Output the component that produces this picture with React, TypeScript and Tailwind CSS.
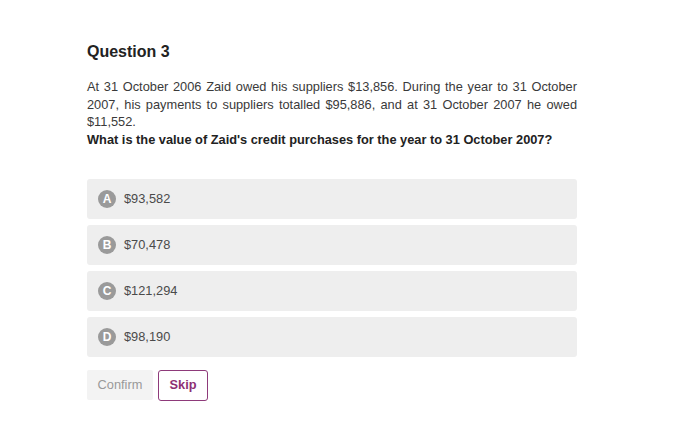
export default function App() {
  const options = [
    { letter: "A", text: "$93,582" },
    { letter: "B", text: "$70,478" },
    { letter: "C", text: "$121,294" },
    { letter: "D", text: "$98,190" },
  ];

  return (
    <div className="w-[700px] h-[426px] bg-white font-['Liberation_Sans',Arial,sans-serif] text-[#333]">
      <div className="ml-[87px] w-[490px] pt-[42px]">
        <h1 className="text-[16px] font-bold text-[#222] leading-[20px]">Question 3</h1>

        {/* Question body */}
        <p className="mt-[16px] text-[12.8px] leading-[17.5px] text-justify text-[#3a3a3a]">
          At 31 October 2006 Zaid owed his suppliers $13,856. During the year to 31 October 2007,
          his payments to suppliers totalled $95,886, and at 31 October 2007 he owed $11,552.
        </p>
        <p className="text-[12.8px] leading-[18px] font-bold text-[#222]">
          What is the value of Zaid's credit purchases for the year to 31 October 2007?
        </p>

        {/* Options */}
        <div className="mt-[30px] flex flex-col gap-[6px]">
          {options.map((o) => (
            <div
              key={o.letter}
              className="h-[40px] rounded-[3px] bg-[#eeeeee] flex items-center pl-[11px] cursor-pointer"
            >
              <span className="w-[18px] h-[18px] rounded-full bg-[#9a9a9a] text-white text-[12px] font-bold flex items-center justify-center">
                {o.letter}
              </span>
              <span className="ml-[8px] text-[12.8px] text-[#4a4a4a]">{o.text}</span>
            </div>
          ))}
        </div>

        {/* Buttons */}
        <div className="mt-[13px] flex gap-[5px]">
          <button className="h-[30px] w-[66px] rounded-[2px] bg-[#f3f3f3] text-[12.8px] text-[#999]">
            Confirm
          </button>
          <button className="h-[31px] w-[50px] rounded-[3px] border border-[#8e3a7a] bg-white text-[12.8px] font-bold text-[#8e2f74]">
            Skip
          </button>
        </div>
      </div>
    </div>
  );
}
